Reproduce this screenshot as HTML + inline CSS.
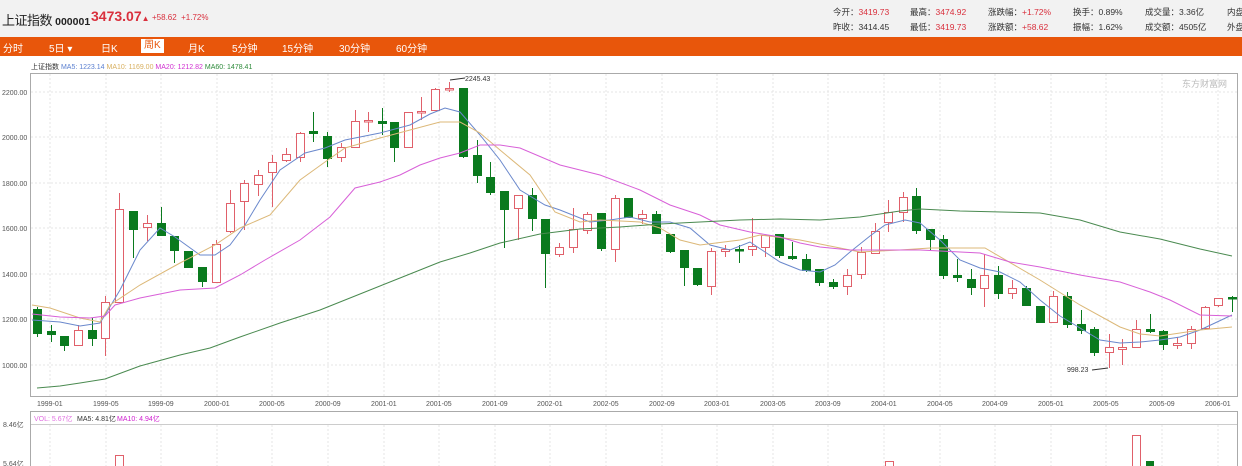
<!DOCTYPE html>
<html><head><meta charset="utf-8"><style>
*{margin:0;padding:0;box-sizing:border-box}
body{width:1242px;height:466px;overflow:hidden;background:#fff;font-family:"Liberation Sans","Noto Sans CJK SC",sans-serif;position:relative}
.hd{position:absolute;left:0;top:0;width:1242px;height:37px;background:#f2f2f2}
.t{position:absolute;white-space:nowrap}
.bar{position:absolute;left:0;top:37px;width:1242px;height:19px;background:#e8560b}
.bar span{position:absolute;top:3px;color:#fff;font-size:10px}
.r{color:#d9303d}
.s{font-size:8.5px;color:#333}
</style></head><body>
<div class="hd"></div>
<div class="t" style="left:2px;top:10px;font-size:13px;color:#222;letter-spacing:-0.5px">上证指数 <b style="font-size:10.5px;letter-spacing:0">000001</b></div>
<div class="t r" style="left:91px;top:8px;font-size:14px;font-weight:bold">3473.07<span style="font-size:8px">▲</span></div>
<div class="t r" style="left:152px;top:13px;font-size:8px">+58.62 &nbsp;+1.72%</div>
<div class="t s" style="left:833px;top:6px">今开：<span class="r">3419.73</span></div>
<div class="t s" style="left:833px;top:21px">昨收：3414.45</div>
<div class="t s" style="left:910px;top:6px">最高：<span class="r">3474.92</span></div>
<div class="t s" style="left:910px;top:21px">最低：<span class="r">3419.73</span></div>
<div class="t s" style="left:988px;top:6px">涨跌幅：<span class="r">+1.72%</span></div>
<div class="t s" style="left:988px;top:21px">涨跌额：<span class="r">+58.62</span></div>
<div class="t s" style="left:1073px;top:6px">换手：0.89%</div>
<div class="t s" style="left:1073px;top:21px">振幅：1.62%</div>
<div class="t s" style="left:1145px;top:6px">成交量：3.36亿</div>
<div class="t s" style="left:1145px;top:21px">成交额：4505亿</div>
<div class="t s" style="left:1227px;top:6px">内盘</div>
<div class="t s" style="left:1227px;top:21px">外盘</div>
<div class="bar">
<span style="left:3px">分时</span><span style="left:49px">5日 ▾</span><span style="left:101px">日K</span>
<span style="left:141px;top:2px;background:#fff;color:#e8560b;padding:0 3px;line-height:14px">周K</span>
<span style="left:188px">月K</span><span style="left:232px">5分钟</span><span style="left:282px">15分钟</span><span style="left:339px">30分钟</span><span style="left:396px">60分钟</span>
</div>
<div class="t" style="left:31px;top:62px;font-size:7px;color:#333">上证指数 <span style="color:#5a7fd0">MA5: 1223.14</span> <span style="color:#d8b060">MA10: 1169.00</span> <span style="color:#d030d0">MA20: 1212.82</span> <span style="color:#2d8a3a">MA60: 1478.41</span></div>
<svg id="c" width="1242" height="466" style="position:absolute;left:0;top:0" font-family="Liberation Sans" font-size="7"></svg>
<script>
var s=document.getElementById('c'),h='';
h+='<rect x="30.5" y="73.5" width="1207" height="323" fill="none" stroke="#aaa"/>';
var ys=[92,137,183,228,274,319,365],lb=['2200.00','2000.00','1800.00','1600.00','1400.00','1200.00','1000.00'];
ys.forEach(function(y,i){h+='<line x1="31" x2="1237" y1="'+y+'" y2="'+y+'" stroke="#e4e4e4" stroke-dasharray="2,2"/><text x="2" y="'+(y+3)+'" fill="#555">'+lb[i]+'</text>';});
var dl=['1999-01','1999-05','1999-09','2000-01','2000-05','2000-09','2001-01','2001-05','2001-09','2002-01','2002-05','2002-09','2003-01','2003-05','2003-09','2004-01','2004-05','2004-09','2005-01','2005-05','2005-09','2006-01'];
dl.forEach(function(d,i){var x=Math.round(50+55.6*i);h+='<line x1="'+x+'" x2="'+x+'" y1="74" y2="396" stroke="#e4e4e4" stroke-dasharray="2,2"/><line x1="'+x+'" x2="'+x+'" y1="425" y2="466" stroke="#e4e4e4" stroke-dasharray="2,2"/><text x="'+(x-13)+'" y="406" fill="#555">'+d+'</text>';});
var C=[[37,309,333,307,337,0],[51,331,334,325,342,0],[64,336,345,336,351,0],[78,330,345,325,346,1],[92,330,338,318,346,0],[105,302,338,296,356,1],[119,209,302,193,302,1],[133,211,229,211,258,0],[147,223,227,215,241,1],[161,223,235,207,235,0],[174,236,250,236,263,0],[188,251,267,251,267,0],[202,267,281,267,287,0],[216,244,282,240,283,1],[230,203,231,190,233,1],[244,183,201,180,230,1],[258,175,184,170,196,1],[272,162,172,155,207,1],[286,154,160,148,162,1],[300,133,157,132,162,1],[313,131,133,112,142,0],[327,136,158,132,167,0],[341,147,157,143,162,1],[355,121,147,110,148,1],[368,120,121,112,132,1],[382,121,123,108,135,0],[394,122,147,122,162,0],[408,112,147,112,148,1],[421,111,112,97,120,1],[435,89,110,88,110,1],[449,88,89,82,92,1],[463,88,156,88,158,0],[477,155,175,140,183,0],[490,177,192,162,195,0],[504,191,209,191,248,0],[518,195,208,195,240,1],[532,195,218,188,231,0],[545,219,253,219,288,0],[559,247,254,243,257,1],[573,229,247,208,253,1],[587,214,230,212,234,1],[601,213,248,213,251,0],[615,198,249,195,262,1],[628,198,217,198,217,0],[642,214,218,210,224,1],[656,214,233,211,234,0],[670,234,251,234,253,0],[684,250,267,250,286,0],[697,268,284,268,286,0],[711,251,286,248,295,1],[725,249,251,245,257,1],[739,249,250,245,263,0],[752,246,249,218,256,1],[765,235,247,235,257,1],[779,234,255,234,258,0],[792,256,258,242,260,0],[806,259,270,254,272,0],[819,269,282,269,286,0],[833,282,286,279,289,0],[847,275,286,269,295,1],[861,252,274,247,279,1],[875,231,253,223,254,1],[888,212,222,200,232,1],[903,197,212,192,222,1],[916,196,230,188,234,0],[930,229,239,229,250,0],[943,239,275,235,279,0],[957,275,277,259,282,0],[971,279,287,269,295,0],[984,275,288,254,307,1],[998,275,293,266,299,0],[1012,288,293,280,299,1],[1026,288,305,286,306,0],[1040,306,322,306,322,0],[1053,296,322,291,322,1],[1067,296,324,292,328,0],[1081,324,330,310,334,0],[1094,329,352,327,356,0],[1109,347,352,334,368,1],[1122,347,349,339,365,1],[1136,329,347,320,348,1],[1150,329,331,314,333,0],[1163,331,344,330,350,0],[1177,343,345,337,349,1],[1191,329,343,326,349,1],[1205,307,328,306,329,1],[1218,298,305,298,307,1],[1232,297,298,296,312,0]];
C.forEach(function(c){var col=c[5]?'#e0606a':'#0a7a1e';
h+='<line x1="'+c[0]+'.5" x2="'+c[0]+'.5" y1="'+c[3]+'" y2="'+c[4]+'" stroke="'+col+'"/>';
var bh=Math.max(c[2]-c[1],1.5);
h+='<rect x="'+(c[0]-4)+'.5" y="'+c[1]+'.5" width="8" height="'+bh+'" fill="'+(c[5]?'#fff':'#0a7a1e')+'" stroke="'+col+'"/>';});
function pl(p,col){h+='<polyline fill="none" stroke="'+col+'" stroke-width="1" points="'+p+'"/>';}
pl('32,320 60,322 80,326 100,323 105,315 120,290 140,250 160,228 175,237 200,255 215,255 230,245 245,225 260,200 280,170 305,153 325,148 345,140 370,135 380,133 410,125 430,114 445,108 460,112 480,135 500,160 520,190 545,205 560,210 590,222 610,220 630,217 650,222 670,222 690,228 710,245 730,250 750,242 765,252 780,262 800,270 820,272 835,265 850,252 870,236 885,225 905,220 920,223 940,240 960,260 980,268 1000,272 1020,282 1040,300 1060,316 1080,328 1100,340 1120,343 1140,342 1160,340 1180,337 1200,330 1232,315','#6a88cc');
pl('32,305 50,308 80,318 100,322 110,305 140,285 180,263 215,245 240,228 270,215 300,180 325,162 345,148 380,138 410,130 440,122 460,122 480,133 500,150 530,175 555,212 580,222 600,220 640,222 660,228 680,240 700,245 740,240 760,235 800,240 830,246 860,252 900,250 930,248 985,248 1040,280 1080,305 1120,327 1140,334 1160,336 1200,330 1232,327','#dcb878');
pl('32,314 60,317 90,318 105,316 115,305 140,298 180,290 215,288 240,275 265,260 300,240 330,217 355,188 380,182 400,175 420,165 440,158 460,153 480,145 500,145 520,148 560,165 600,175 640,190 670,205 700,215 720,225 750,232 780,237 800,243 820,247 850,250 880,250 920,250 980,253 1010,262 1040,267 1080,275 1120,282 1150,292 1170,300 1200,315 1232,316','#d860d8');
pl('37,388 60,386 80,383 105,379 140,366 180,355 210,348 240,337 280,323 320,310 360,294 400,278 440,262 470,253 500,243 540,234 580,229 620,227 660,224 700,222 740,220 780,219 820,220 860,217 900,211 920,209 960,211 1040,213 1080,220 1120,232 1160,239 1200,249 1232,256','#4a8a50');
h+='<line x1="450" x2="465" y1="80" y2="78" stroke="#333"/><text x="465" y="81" fill="#333">2245.43</text>';
h+='<line x1="1092" x2="1108" y1="370" y2="368" stroke="#333"/><text x="1067" y="372" fill="#333">998.23</text>';
h+='<text x="1182" y="87" fill="#bbb" font-size="9">东方财富网</text>';
h+='<rect x="30.5" y="411.5" width="1207" height="60" fill="none" stroke="#aaa"/><line x1="31" x2="1237" y1="424.5" y2="424.5" stroke="#ccc"/>';
h+='<text x="34" y="421" fill="#e070e0">VOL: 5.67亿</text><text x="77" y="421" fill="#333">MA5: 4.81亿</text><text x="117" y="421" fill="#d020d0">MA10: 4.94亿</text>';
h+='<text x="3" y="427" fill="#555">8.46亿</text><text x="3" y="466" fill="#555">5.64亿</text>';
h+='<rect x="115.5" y="455.5" width="8" height="20" fill="#fff" stroke="#e0606a"/><rect x="885.5" y="461.5" width="8" height="20" fill="#fff" stroke="#e0606a"/><rect x="1132.5" y="435.5" width="8" height="40" fill="#fff" stroke="#e0606a"/><rect x="1146" y="461" width="8" height="10" fill="#0a7a1e"/>';
s.innerHTML=h;
</script>
</body></html>
